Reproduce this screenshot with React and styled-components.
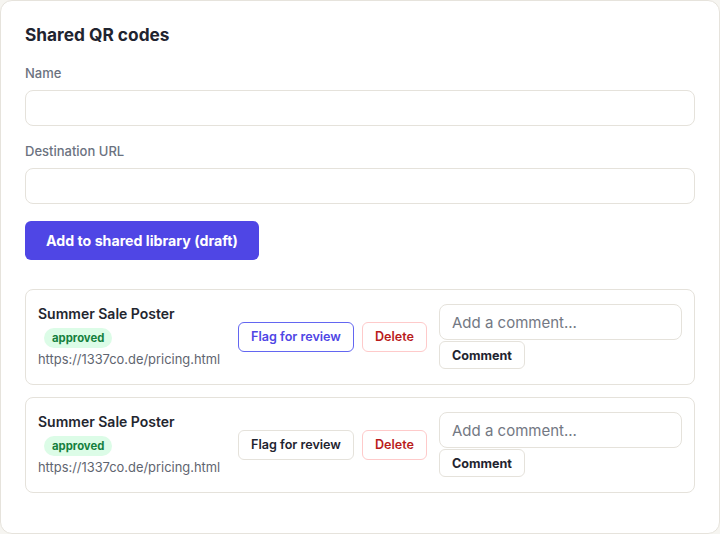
import styled, { createGlobalStyle } from "styled-components";

const Global = createGlobalStyle`
  html, body {
    margin: 0;
    padding: 0;
    background: #f6f5f1;
    font-family: Inter, "Noto Sans", sans-serif;
    color: #1f2937;
  }
  * { box-sizing: border-box; }
`;

const Card = styled.div`
  width: 720px;
  min-height: 533px;
  background: #ffffff;
  border: 1px solid #e6e3dc;
  border-radius: 12px;
  padding: 24px 24px 40px;
`;

const Title = styled.h2`
  margin: 0 0 19px;
  font-size: 17.3px;
  line-height: 20px;
  font-weight: 700;
  color: #1f2430;
`;

const Label = styled.label`
  display: block;
  font-size: 13px;
  line-height: 18px;
  font-weight: 500;
  color: #6b7280;
  margin: ${p => p.$top || 0}px 0 8px;
`;

const Input = styled.input`
  display: block;
  width: 100%;
  height: 36px;
  border: 1px solid #e5e2db;
  border-radius: 8px;
  padding: 0 12px;
  font-family: inherit;
  font-size: 15px;
  color: #1f2937;
  background: #fff;
  outline: none;
  &::placeholder { color: #737883; }
`;

const Primary = styled.button`
  display: block;
  margin-top: 17px;
  height: 39px;
  padding: 0 21px;
  border: none;
  border-radius: 6px;
  background: #4f46e5;
  color: #fff;
  font-family: inherit;
  font-size: 14.2px;
  font-weight: 700;
`;

const List = styled.div`
  margin-top: 29px;
  display: flex;
  flex-direction: column;
  gap: 12px;
`;

const Item = styled.div`
  display: flex;
  align-items: center;
  gap: 12px;
  border: 1px solid #e5e2db;
  border-radius: 8px;
  padding: 14px 12px 15px;
`;

const Info = styled.div`
  flex: 1;
  min-width: 0;
`;

const Name = styled.div`
  font-size: 14px;
  line-height: 20px;
  font-weight: 600;
  color: #23262f;
`;

const Badge = styled.span`
  display: inline-block;
  margin: 4px 0 0 6px;
  padding: 0 8px;
  height: 20px;
  line-height: 20px;
  border-radius: 999px;
  background: #dcfce7;
  color: #15803d;
  font-size: 11.3px;
  font-weight: 700;
`;

const Url = styled.div`
  margin-top: 3px;
  font-size: 12.9px;
  line-height: 18px;
  color: #5f6570;
`;

const Actions = styled.div`
  display: flex;
  gap: 8px;
`;

const Small = styled.button`
  height: 30px;
  padding: 0 12px;
  border-radius: 6px;
  background: #fff;
  font-family: inherit;
  font-size: 12.6px;
  font-weight: 600;
  border: 1px solid ${p => p.$tone === "indigo" ? "#6366f1" : p.$tone === "red" ? "#fecaca" : "#e5e2db"};
  color: ${p => p.$tone === "indigo" ? "#4f46e5" : p.$tone === "red" ? "#b91c1c" : "#1f2430"};
`;

const CommentBox = styled.div`
  width: 243px;
  display: flex;
  flex-direction: column;
  align-items: flex-start;
  gap: 1px;
`;

const CommentBtn = styled.button`
  height: 28px;
  padding: 0 12px;
  border: 1px solid #e5e2db;
  border-radius: 6px;
  background: #fff;
  font-family: inherit;
  font-size: 12.6px;
  font-weight: 700;
  color: #1f2430;
`;

const codes = [
  { name: "Summer Sale Poster", status: "approved", url: "https://1337co.de/pricing.html", flagTone: "indigo" },
  { name: "Summer Sale Poster", status: "approved", url: "https://1337co.de/pricing.html", flagTone: "plain" },
];

export default function App() {
  return (
    <>
      <Global />
      <Card>
        <Title>Shared QR codes</Title>
        <Label>Name</Label>
        <Input />
        <Label $top={16}>Destination URL</Label>
        <Input />
        <Primary>Add to shared library (draft)</Primary>
        <List>
          {codes.map((c, i) => (
            <Item key={i}>
              <Info>
                <Name>{c.name}</Name>
                <Badge>{c.status}</Badge>
                <Url>{c.url}</Url>
              </Info>
              <Actions>
                <Small $tone={c.flagTone}>Flag for review</Small>
                <Small $tone="red">Delete</Small>
              </Actions>
              <CommentBox>
                <Input placeholder="Add a comment..." />
                <CommentBtn>Comment</CommentBtn>
              </CommentBox>
            </Item>
          ))}
        </List>
      </Card>
    </>
  );
}
